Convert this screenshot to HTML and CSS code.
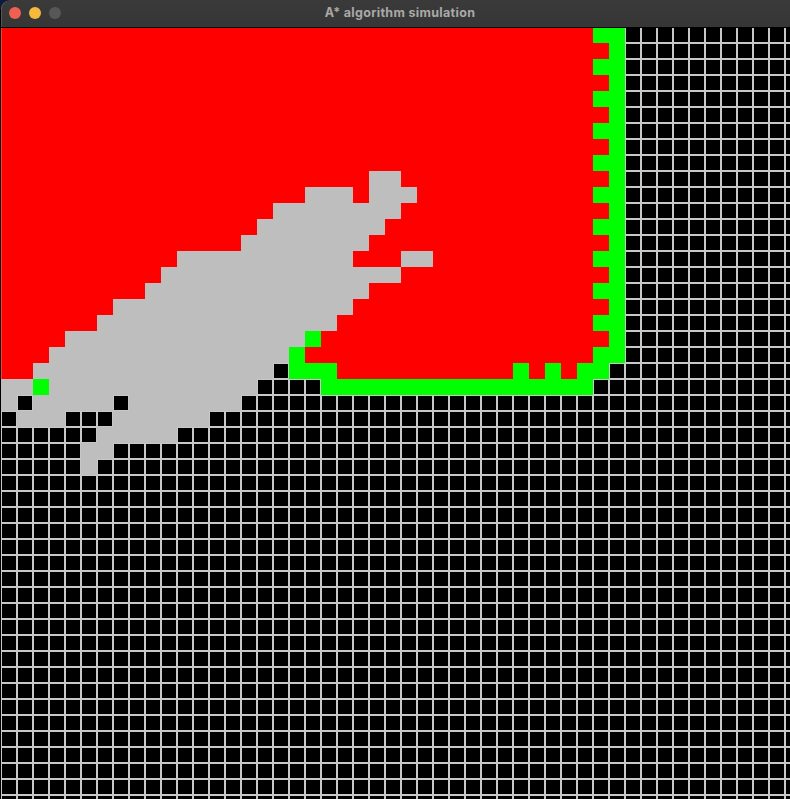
FILE: index.html
```html
<!DOCTYPE html>
<html lang="en">
<head>
<meta charset="utf-8">
<title>A* algorithm simulation</title>
<link rel="stylesheet" href="styles.css">
</head>
<body>
<div class="window">
  <header class="titlebar">
    <div class="controls">
      <span class="dot close"></span>
      <span class="dot minimize"></span>
      <span class="dot zoom"></span>
    </div>
    <h1 class="title">A* algorithm simulation</h1>
  </header>
  <main class="board" id="board"></main>
</div>
<script src="grid.js"></script>
</body>
</html>
```

FILE: styles.css
```css
* { box-sizing: border-box; }
body {
  margin: 0;
  width: 790px;
  height: 799px;
  overflow: hidden;
  background: linear-gradient(#0d1a3c 0, #0d1a3c 9px, #000 10px);
}
.window {
  height: 799px;
  padding-left: 1px;
  overflow: hidden;
  border-top-left-radius: 10px;
}
.titlebar {
  display: grid;
  grid-template-columns: 70px 1fr 61px;
  align-items: center;
  height: 27px;
  padding-bottom: 1px;
  background: linear-gradient(#3a3a3a, #363636);
  border-top-left-radius: 9px;
  box-shadow: inset 1px 0 #555;
}
.controls {
  display: flex;
  gap: 8px;
  padding-left: 8px;
}
.dot {
  width: 12px;
  height: 12px;
  border-radius: 50%;
}
.close { background: #ef6052; }
.minimize { background: #f5ba3c; }
.zoom { background: #575757; }
.title {
  margin: 0;
  padding-bottom: 1px;
  color: #a9a9a9;
  font: 700 12.5px/15px Inter, sans-serif;
  letter-spacing: 0.32px;
  text-align: center;
  white-space: nowrap;
}
.board {
  display: grid;
  grid-template-columns: repeat(50, 16px);
  grid-auto-rows: 16px;
  height: 772px;
  overflow: hidden;
  background: #000;
  position: relative;
}
.board::before {
  content: "";
  position: absolute;
  inset: 0 0 auto;
  height: 1px;
  background: #000;
}
.open { border: 1px solid #c8c8c8; background: #000; }
.wall { background: #bebebe; }
.visited { background: #f00; }
.visited:nth-child(50n + 1) { border-left: 1px solid #ff3b30; }
.frontier { background: #0f0; }
```

FILE: grid.js
```js
const COLS = 50;
const ROWS = 49;
const KINDS = { r: 'visited', g: 'frontier', w: 'wall', '.': 'open' };

// Run lengths per row; the remainder of a row is open.
const rows = [];
for (let y = 0; y <= 20; y++) rows.push(y % 2 ? '38r 1g' : '37r 2g');
rows.push(
  '2r 15w 1. 3g 11r 1g 1r 1g 1r 2g',
  '2w 1g 13w 4. 17g',
  '1w 1. 5w 1. 7w',
  '1. 3w 3. 6w',
  '6. 5w',
  '5. 2w',
  '5. 1w'
);

// Obstacle spans inside the explored area: [row, first column, last column].
const walls = [
  [9, 23, 24], [10, 19, 21], [10, 23, 25], [11, 17, 24], [12, 16, 23],
  [13, 15, 22], [14, 11, 21], [14, 25, 26], [15, 10, 24], [16, 9, 22],
  [17, 7, 21], [18, 6, 20], [19, 4, 18], [20, 3, 17]
];

const grid = Array.from({ length: ROWS }, (_, y) => {
  const line = (rows[y] || '').replace(/(\d+)(\S)\s*/g, (_, n, k) => k.repeat(n));
  return [...line.padEnd(COLS, '.')];
});
walls.forEach(([y, a, b]) => grid[y].fill('w', a, b + 1));
grid[19][19] = 'g';
grid[20][18] = 'g';

const board = document.getElementById('board');
grid.flat().forEach(kind => {
  const cell = document.createElement('div');
  cell.className = KINDS[kind];
  board.appendChild(cell);
});
```
